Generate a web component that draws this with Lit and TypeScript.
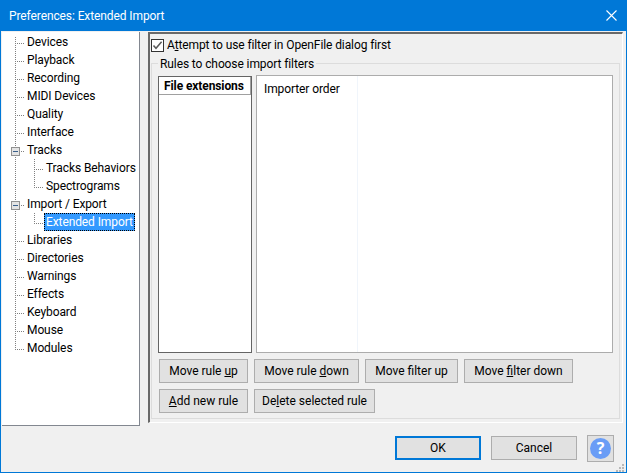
import { LitElement, html, css, svg } from "lit";
import { customElement } from "lit/decorators.js";

type Node = { t: string; lvl: number; box?: boolean; last?: boolean; sel?: boolean };
const nodes: Node[] = [
  { t: "Devices", lvl: 1 }, { t: "Playback", lvl: 1 }, { t: "Recording", lvl: 1 }, { t: "MIDI Devices", lvl: 1 },
  { t: "Quality", lvl: 1 }, { t: "Interface", lvl: 1 }, { t: "Tracks", lvl: 1, box: true },
  { t: "Tracks Behaviors", lvl: 2 }, { t: "Spectrograms", lvl: 2, last: true },
  { t: "Import / Export", lvl: 1, box: true }, { t: "Extended Import", lvl: 2, last: true, sel: true },
  { t: "Libraries", lvl: 1 }, { t: "Directories", lvl: 1 }, { t: "Warnings", lvl: 1 }, { t: "Effects", lvl: 1 },
  { t: "Keyboard", lvl: 1 }, { t: "Mouse", lvl: 1 }, { t: "Modules", lvl: 1, last: true },
];

function glyph(n: Node, i: number) {
  const x1 = 14.5, x2 = 33.5;
  const lastTop = n.lvl === 1 && n.last;
  const first = i === 0;
  const w = n.lvl === 1 ? 24 : 43;
  return svg`<svg class="g" width="${w}" height="18" viewBox="0 0 ${w} 18" shape-rendering="crispEdges">
    <g stroke="#808080" stroke-width="1" stroke-dasharray="1 1" fill="none">
      <line x1="${x1}" x2="${x1}" y1="${first ? 4 : 0}" y2="${lastTop ? 11 : 18}"></line>
      ${n.lvl === 1
        ? svg`<line x1="${n.box ? 20 : 16}" x2="24" y1="10.5" y2="10.5"></line>`
        : svg`<line x1="${x2}" x2="${x2}" y1="0" y2="${n.last ? 11 : 18}"></line><line x1="35" x2="43" y1="10.5" y2="10.5"></line>`}
    </g>
    ${n.box ? svg`<rect x="10.5" y="6.5" width="8" height="8" fill="#e4e4e4" stroke="#919191"></rect><line x1="12" x2="17" y1="10.5" y2="10.5" stroke="#3a5f8a"></line>` : ""}
  </svg>`;
}

@customElement("app-root")
export class AppRoot extends LitElement {
  static styles = css`
    :host { display: block; width: 627px; height: 473px; box-sizing: border-box; background: #f0f0f0;
      border: 1px solid #0078d7; border-top: none; font-family: Roboto, "Open Sans", sans-serif; font-size: 12px; letter-spacing: -0.1px; color: #000; overflow: hidden; }
    .title { height: 31px; background: #0078d7; color: #fff; display: flex; align-items: center; justify-content: space-between; padding: 0 9px 0 8px; font-size: 12px; }
    .title svg { display: block; }
    .main { display: flex; height: 395px; padding: 1px 0 0 1px; }
    .tree { width: 138px; box-sizing: border-box; background: #fff; height: 394px; border-right: 1px solid #828790; border-bottom: 1px solid #828790; padding-top: 1px; flex: none; }
    .row { display: flex; height: 18px; align-items: center; white-space: nowrap; margin-left: -1px; }
    .g { flex: none; display: block; }
    .txt { padding: 0 2px; line-height: 18px; }
    .txt.sel { background: #3399ff; color: #fff; outline: 1px dotted #000; outline-offset: -1px; height: 18px; }
    .page { margin-left: 8px; width: 475px; height: 391px; box-sizing: border-box; border-top: 2px solid #696969; border-left: 2px solid #696969; border-right: 1px solid #fff; border-bottom: 1px solid #fff; padding: 3px 2px 3px 1px; display: flex; flex-direction: column; }
    .check { display: flex; align-items: center; gap: 3px; height: 16px; white-space: nowrap; }
    .box { width: 11px; height: 11px; border: 1px solid #333; flex: none; display: block; background: #fff; }
    u { text-underline-offset: 1px; }
    .group { flex: 1; margin-top: 10px; border: 1px solid #dcdcdc; position: relative; padding: 11px 6px 5px 6px; display: flex; flex-direction: column; }
    .legend { position: absolute; left: 6px; top: -7px; background: #f0f0f0; padding: 0 2px; white-space: nowrap; }
    .lists { flex: 1; display: flex; gap: 4px; min-height: 0; }
    .ext { width: 94px; margin-top: 1px; box-sizing: border-box; background: #fff; border: 1px solid #646464; }
    .ext .h { height: 18px; box-sizing: border-box; border-bottom: 1px solid #a0a0a0; border-right: 1px solid #a0a0a0; font-weight: 700; padding-left: 5px; line-height: 18px; white-space: nowrap; }
    .imp { flex: 1; box-sizing: border-box; background: #fff; border: 1px solid #acacac; display: flex; }
    .imp .c { width: 101px; border-right: 1px solid #f0f5fb; padding: 4px 0 0 7px; box-sizing: border-box; line-height: 18px; }
    .btns { display: flex; gap: 6px; margin-top: 6px; margin-left: 1px; }
    button { font: inherit; letter-spacing: 0; color: #000; height: 24px; box-sizing: border-box; background: #e1e1e1; border: 1px solid #adadad; padding: 0; white-space: nowrap; }
    .w89 { width: 89px; } .w105 { width: 105px; } .w93 { width: 93px; } .w109 { width: 109px; } .w121 { width: 121px; }
    .footer { display: flex; align-items: flex-start; justify-content: flex-end; padding: 9px 12px 0 0; gap: 10px; position: relative; height: 46px; box-sizing: border-box; }
    .footer button.ok { width: 86px; height: 24px; border: 2px solid #0078d7; }
    .footer button.cancel { width: 86px; height: 24px; }
    .help { width: 27px; height: 27px; box-sizing: border-box; background: #e1e1e1; border: 1px solid #adadad; display: flex; align-items: center; justify-content: center; margin-top: -1px; }
    .grip { position: absolute; right: 2px; bottom: 1px; }
  `;
  render() {
    return html`
      <div class="title"><span>Preferences: Extended Import</span>
        <svg width="11" height="11" viewBox="0 0 11 11"><path d="M0.5 0.5 10.5 10.5M10.5 0.5 0.5 10.5" stroke="#fff" stroke-width="1.1" fill="none"/></svg>
      </div>
      <div class="main">
        <div class="tree">
          ${nodes.map((n, i) => html`<div class="row">${glyph(n, i)}<span class="txt ${n.sel ? "sel" : ""}">${n.t}</span></div>`)}
        </div>
        <div class="page">
          <div class="check">
            <svg class="box" viewBox="0 0 11 11"><path d="M1.5 5.5 4 8.3 9.6 1.8" stroke="#5a5a5a" stroke-width="1.5" fill="none"/></svg>
            <span>A<u>t</u>tempt to use filter in OpenFile dialog first</span>
          </div>
          <div class="group">
            <span class="legend">Rules to choose import filters</span>
            <div class="lists">
              <div class="ext"><div class="h">File extensions</div></div>
              <div class="imp"><div class="c">Importer order</div></div>
            </div>
            <div class="btns">
              <button class="w89">Move rule <u>u</u>p</button>
              <button class="w105">Move rule <u>d</u>own</button>
              <button class="w93">Move f<u>i</u>lter up</button>
              <button class="w109">Move <u>f</u>ilter down</button>
            </div>
            <div class="btns">
              <button class="w89"><u>A</u>dd new rule</button>
              <button class="w121">De<u>l</u>ete selected rule</button>
            </div>
          </div>
        </div>
      </div>
      <div class="footer">
        <button class="ok">OK</button>
        <button class="cancel">Cancel</button>
        <div class="help"><svg width="21" height="21" viewBox="0 0 21 21"><circle cx="10.5" cy="10.5" r="10.5" fill="#6a9df6"/><text x="10.5" y="16" text-anchor="middle" font-size="16" font-weight="700" fill="#fff" font-family="Open Sans, sans-serif">?</text></svg></div>
        <svg class="grip" width="8" height="8" viewBox="0 0 8 8"><g fill="#b8b8b8"><rect x="6" y="0" width="2" height="2"/><rect x="3" y="3" width="2" height="2"/><rect x="6" y="3" width="2" height="2"/><rect x="0" y="6" width="2" height="2"/><rect x="3" y="6" width="2" height="2"/><rect x="6" y="6" width="2" height="2"/></g></svg>
      </div>
    `;
  }
}
